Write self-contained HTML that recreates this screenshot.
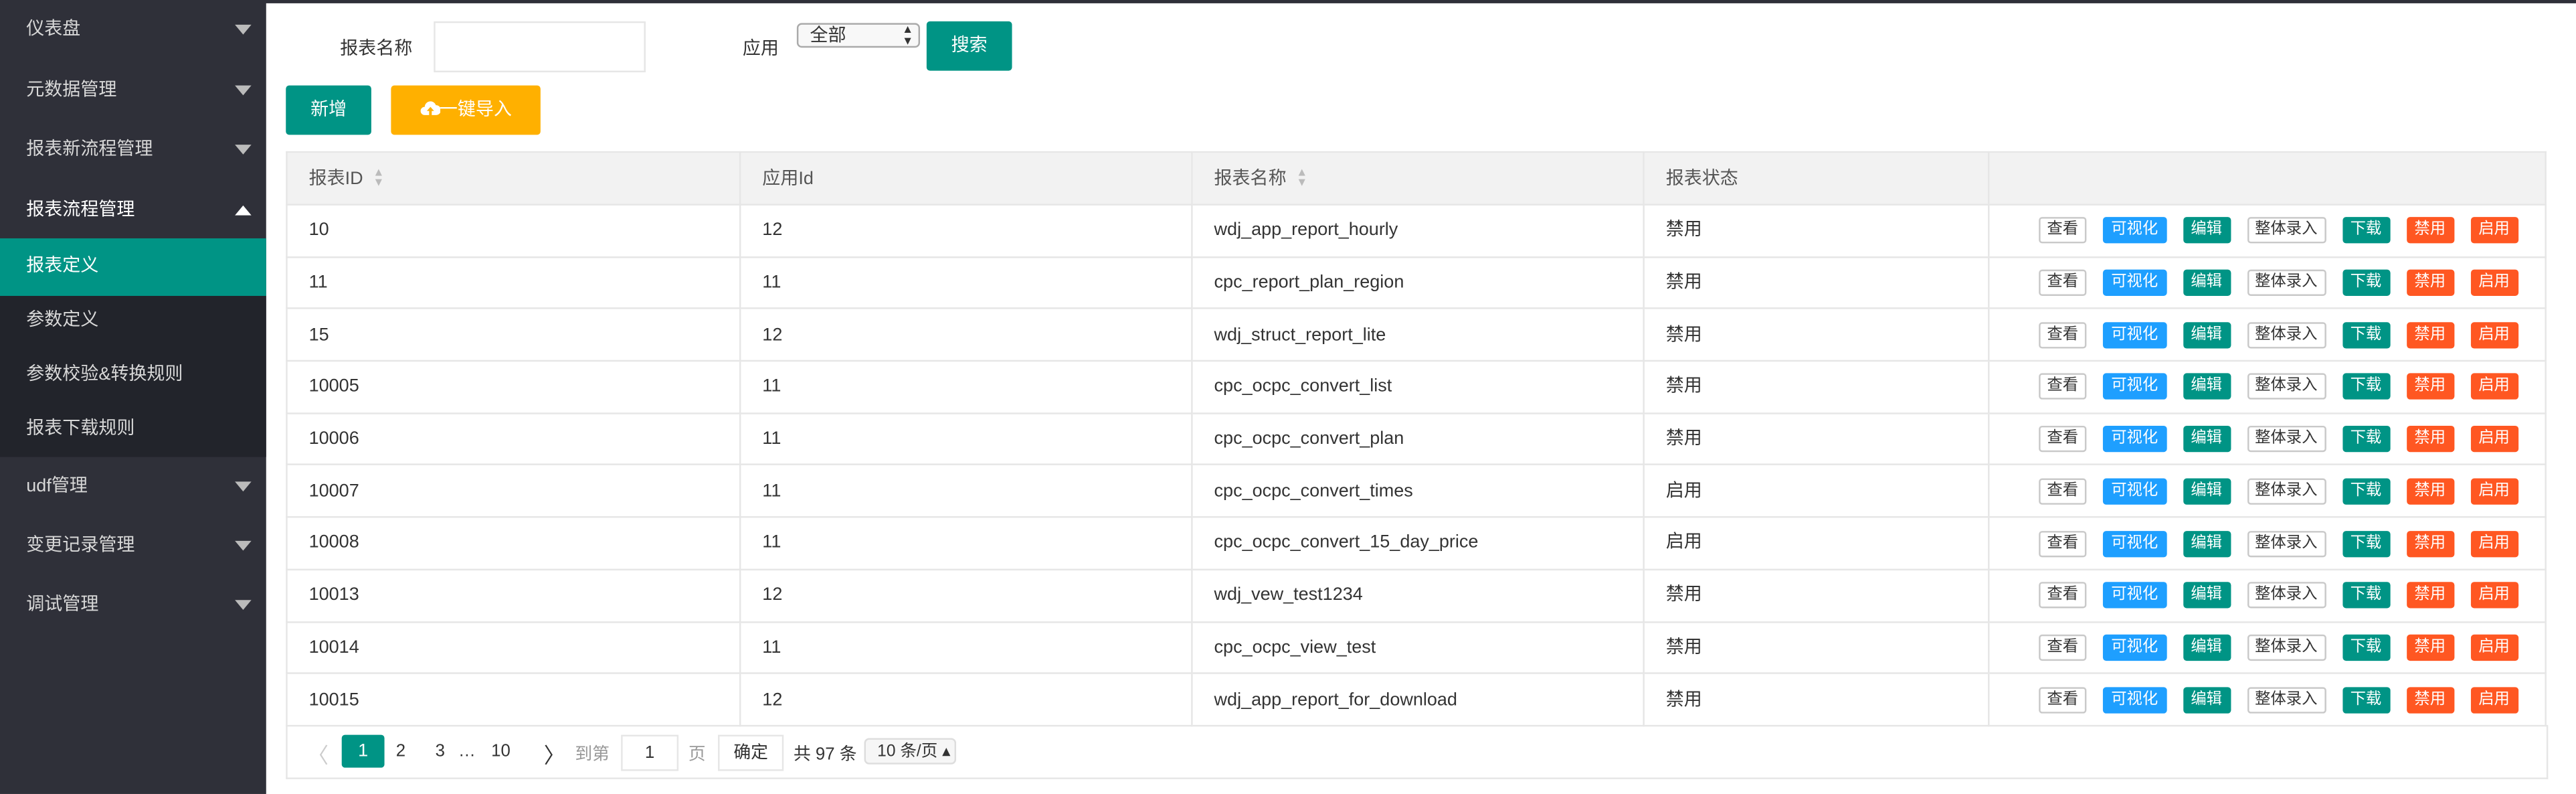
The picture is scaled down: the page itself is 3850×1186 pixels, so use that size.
<!DOCTYPE html>
<html><head><meta charset="utf-8"><style>
html,body{margin:0;padding:0;width:3850px;height:1186px;overflow:hidden;background:#fff}
#w{position:absolute;left:0;top:0;width:1568px;height:483px;transform:scale(2.4554);transform-origin:0 0;font-family:"Liberation Sans","Noto Sans CJK SC",sans-serif;font-size:11px;color:#333}
.top{position:absolute;left:0;top:0;width:1568px;height:2px;background:#2f3039}
.side{position:absolute;left:0;top:0;width:162px;height:483px;background:#2f3039}
.sub{position:absolute;left:0;top:180px;width:162px;height:98px;background:#22242b}
.mi{position:absolute;left:16px;color:#d8d8d8;font-size:11px;line-height:16px}
.ar{position:absolute;left:143px;width:0;height:0;border-left:5px solid transparent;border-right:5px solid transparent;border-top:6px solid #bbb}
.act{position:absolute;left:0;top:145px;width:162px;height:35px;background:#009485}
.btn{position:absolute;color:#fff;text-align:center;border-radius:2px;font-size:11px}
table{position:absolute;left:174px;top:92px;width:1376px;border-collapse:collapse;table-layout:fixed}
td,th{border:1px solid #e6e6e6;height:30.7px;padding:0 0 0 13px;text-align:left;font-weight:normal;font-size:11px;vertical-align:middle;line-height:16px;white-space:nowrap;overflow:hidden}
th{background:#f2f2f2;color:#555;height:31px}
.b{display:inline-block;height:16px;line-height:16px;font-size:9.5px;padding:0 5px;border-radius:2px;margin-right:10px;vertical-align:middle;color:#fff}
.g{background:#009485}.bl{background:#1e9fff}.r{background:#ff5722}.o{border:1px solid #c9c9c9;color:#333;height:14px;line-height:14px;background:#fff;padding:0 4px}
.sort{display:inline-block;vertical-align:middle;margin-left:6px;color:#bbb;font-size:7px;line-height:6px}
.pg{position:absolute;left:174px;top:441px;width:1375px;height:32px;border:1px solid #e6e6e6;border-top:none}
.pg span{position:absolute;top:10px;font-size:10.5px;color:#333}
</style></head><body><div id="w">
<div class="side"></div><div class="sub"></div><div class="act"></div><div class="top"></div>
<div class="mi" style="top:10px">仪表盘</div><div class="ar" style="top:15px"></div>
<div class="mi" style="top:47px">元数据管理</div><div class="ar" style="top:52px"></div>
<div class="mi" style="top:83px">报表新流程管理</div><div class="ar" style="top:88px"></div>
<div class="mi" style="top:120px;color:#fff">报表流程管理</div><div class="ar" style="top:125px;border-top:none;border-bottom:6px solid #fff"></div>
<div class="mi" style="top:154px;color:#fff">报表定义</div>
<div class="mi" style="top:187px">参数定义</div>
<div class="mi" style="top:220px">参数校验&amp;转换规则</div>
<div class="mi" style="top:253px">报表下载规则</div>
<div class="mi" style="top:288px">udf管理</div><div class="ar" style="top:293px"></div>
<div class="mi" style="top:324px">变更记录管理</div><div class="ar" style="top:329px"></div>
<div class="mi" style="top:360px">调试管理</div><div class="ar" style="top:365px"></div>

<div style="position:absolute;left:207px;top:21px">报表名称</div>
<div style="position:absolute;left:264px;top:13px;width:127px;height:29px;border:1px solid #e6e6e6"></div>
<div style="position:absolute;left:452px;top:21px">应用</div>
<div style="position:absolute;left:485px;top:14px;height:15px;border:1px solid #aaa;border-radius:3px;background:#f8f8f8;font-size:11px;line-height:15px;padding-left:7px;box-sizing:border-box;width:75px">全部<span style="position:absolute;right:3px;top:0;font-size:7px;line-height:7px">▲<br>▼</span></div>
<div class="btn" style="left:564px;top:13px;width:52px;height:30px;line-height:30px;background:#009485">搜索</div>
<div class="btn" style="left:174px;top:52px;width:52px;height:30px;line-height:30px;background:#009485">新增</div>
<div class="btn" style="left:238px;top:52px;width:91px;height:30px;line-height:30px;background:#ffb000"><svg width="12" height="10" viewBox="0 0 12 10" style="vertical-align:-1px"><path d="M3 9H2.5a2.5 2.5 0 0 1 0-5A3.5 3.5 0 0 1 9.3 3 3 3 0 0 1 9.5 9H9" fill="#fff"/><path d="M6 4L3.8 6.5H5.2V10H6.8V6.5H8.2Z" fill="#ffb000"/></svg>一键导入</div>

<table>
<tr><th style="width:262px">报表ID<span class="sort">▲<br>▼</span></th><th style="width:261px">应用Id</th><th style="width:261px">报表名称<span class="sort">▲<br>▼</span></th><th style="width:196px">报表状态</th><th></th></tr>
<tbody id="tb"></tbody>
</table>
<div class="pg">
<span style="left:12px;color:#ccc;font-size:13px;top:8px">〈</span>
<div style="position:absolute;left:33px;top:6px;width:26px;height:20px;background:#009485;color:#fff;text-align:center;line-height:20px;font-size:11px;border-radius:2px">1</div>
<span style="left:66px">2</span><span style="left:90px">3</span><span style="left:104px">…</span><span style="left:124px">10</span>
<span style="left:156px;font-size:13px;top:8px">〉</span><span style="left:175px;color:#999">到第</span>
<div style="position:absolute;left:203px;top:6px;width:33px;height:20px;border:1px solid #e6e6e6;text-align:center;line-height:20px;font-size:10.5px">1</div>
<span style="left:244px;color:#999">页</span>
<div style="position:absolute;left:262px;top:6px;width:38px;height:20px;border:1px solid #e6e6e6;text-align:center;line-height:20px;font-size:10.5px">确定</div>
<span style="left:308px">共 97 条</span>
<div style="position:absolute;left:351px;top:8px;width:56px;height:16px;border:1px solid #ddd;border-radius:3px;background:#f6f6f6;font-size:10px;line-height:16px;padding-left:7px;box-sizing:border-box">10 条/页 ▴</div>
</div>
<script>
var d=[["10","12","wdj_app_report_hourly","禁用"],["11","11","cpc_report_plan_region","禁用"],["15","12","wdj_struct_report_lite","禁用"],["10005","11","cpc_ocpc_convert_list","禁用"],["10006","11","cpc_ocpc_convert_plan","禁用"],["10007","11","cpc_ocpc_convert_times","启用"],["10008","11","cpc_ocpc_convert_15_day_price","启用"],["10013","12","wdj_vew_test1234","禁用"],["10014","11","cpc_ocpc_view_test","禁用"],["10015","12","wdj_app_report_for_download","禁用"]];
var h="";d.forEach(function(r){h+="<tr><td>"+r[0]+"</td><td>"+r[1]+"</td><td>"+r[2]+"</td><td>"+r[3]+'</td><td style="padding-left:30px"><span class="b o">查看</span><span class="b bl">可视化</span><span class="b g">编辑</span><span class="b o">整体录入</span><span class="b g">下载</span><span class="b r">禁用</span><span class="b r">启用</span></td></tr>';});
document.getElementById("tb").innerHTML=h;
</script>
</div></body></html>
